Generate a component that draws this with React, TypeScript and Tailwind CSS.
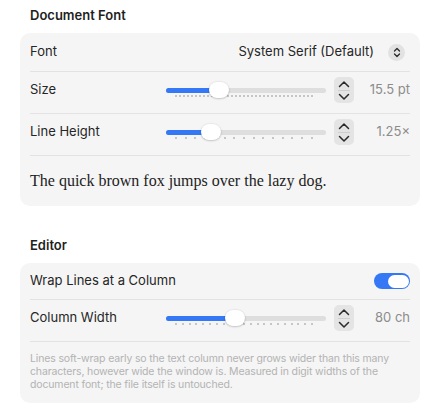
import React from 'react';

const UI = { fontFamily: 'Inter, "Noto Sans", sans-serif' };
const SERIF = { fontFamily: '"Liberation Serif", "DejaVu Serif", serif' };

const Divider = () => <div className="h-px bg-[#e3e3e3]" />;

const Stepper = () => (
  <div className="ml-2 flex h-[26px] w-[20px] flex-col items-center justify-center rounded-[5px] bg-[#e4e4e4]">
    <svg width="12" height="8" viewBox="0 0 12 8" fill="none">
      <path d="M1.5 6.5 L6 2 L10.5 6.5" stroke="#2a2a2a" strokeWidth="1.5" strokeLinecap="round" strokeLinejoin="round" />
    </svg>
    <div className="my-[2px] h-px w-[12px] bg-[#cfcfcf]" />
    <svg width="12" height="8" viewBox="0 0 12 8" fill="none">
      <path d="M1.5 1.5 L6 6 L10.5 1.5" stroke="#2a2a2a" strokeWidth="1.5" strokeLinecap="round" strokeLinejoin="round" />
    </svg>
  </div>
);

type SliderProps = { thumb: number; dots: number };

// thumb = px offset of the thumb's left edge inside the 160px track
const Slider = ({ thumb, dots }: SliderProps) => (
  <div className="relative h-[20px] w-[160px]">
    <div className="absolute left-0 right-0 top-[5.5px] h-[5px] rounded-full bg-[#dedede]" />
    <div
      className="absolute left-0 top-[5.5px] h-[5px] rounded-full bg-[#3478f6]"
      style={{ width: thumb + 10 }}
    />
    <div className="absolute left-[9px] right-[13px] top-[13px] flex justify-between">
      {Array.from({ length: dots }, (_, i) => (
        <span key={i} className="h-[2px] w-[2px] bg-[#c6c6c6]" />
      ))}
    </div>
    <div
      className="absolute top-0 h-[16px] w-[20px] rounded-full bg-white shadow-[0_0.5px_2px_rgba(0,0,0,0.3)]"
      style={{ left: thumb }}
    />
  </div>
);

const SliderRow = ({ label, value, thumb, dots }: { label: string; value: string; thumb: number; dots: number }) => (
  <div className="flex h-[41px] items-center pb-[5px]">
    <span className="flex-1 text-[13px] text-[#262626]">{label}</span>
    <div className="pt-[4px]">
      <Slider thumb={thumb} dots={dots} />
    </div>
    <Stepper />
    <span className="w-[56px] text-right text-[13px] text-[#8c8c8c]">{value}</span>
  </div>
);

const Heading = ({ children }: { children: React.ReactNode }) => (
  <h2 className="px-[10px] text-[13px] font-semibold leading-[18px] text-[#1f1f1f]">{children}</h2>
);

export default function App() {
  return (
    <div className="h-[412px] w-[440px] bg-white px-5 pt-[6px]" style={UI}>
      <Heading>Document Font</Heading>
      <section className="mt-[9px] rounded-[10px] bg-[#f5f5f5] px-[10px]">
        <div className="flex h-[38px] items-center">
          <span className="flex-1 text-[13px] text-[#262626]">Font</span>
          <span className="text-[13px] text-[#262626]">System Serif (Default)</span>
          <div className="ml-[14px] mr-[5px] flex h-[17px] w-[17px] flex-col items-center justify-center rounded-full bg-[#e2e2e2]">
            <svg width="8" height="11" viewBox="0 0 8 11" fill="none">
              <path d="M1.5 4 L4 1.5 L6.5 4" stroke="#2a2a2a" strokeWidth="1.3" strokeLinecap="round" strokeLinejoin="round" />
              <path d="M1.5 7 L4 9.5 L6.5 7" stroke="#2a2a2a" strokeWidth="1.3" strokeLinecap="round" strokeLinejoin="round" />
            </svg>
          </div>
        </div>
        <Divider />
        <SliderRow label="Size" value="15.5 pt" thumb={43} dots={35} />
        <Divider />
        <SliderRow label="Line Height" value="1.25×" thumb={35} dots={15} />
        <Divider />
        <div className="flex h-[50px] items-center">
          <p className="text-[16px] text-[#222]" style={SERIF}>
            The quick brown fox jumps over the lazy dog.
          </p>
        </div>
      </section>

      <div className="mt-[30px]">
        <Heading>Editor</Heading>
      </div>
      <section className="mt-[9px] rounded-[10px] bg-[#f5f5f5] px-[10px]">
        <div className="flex h-[36px] items-center">
          <span className="flex-1 text-[13px] text-[#262626]">Wrap Lines at a Column</span>
          <div className="flex h-[16px] w-[36px] items-center justify-end rounded-full bg-[#3478f6] px-[1.5px]">
            <span className="h-[13px] w-[21px] rounded-full bg-white" />
          </div>
        </div>
        <Divider />
        <SliderRow label="Column Width" value="80 ch" thumb={59} dots={21} />
        <Divider />
        <p className="whitespace-nowrap pb-[12px] pt-[10px] text-[10.5px] leading-[13px] tracking-[-0.15px] text-[#b3b3b3]">
          Lines soft-wrap early so the text column never grows wider than this many
          <br />
          characters, however wide the window is. Measured in digit widths of the
          <br />
          document font; the file itself is untouched.
        </p>
      </section>
    </div>
  );
}
